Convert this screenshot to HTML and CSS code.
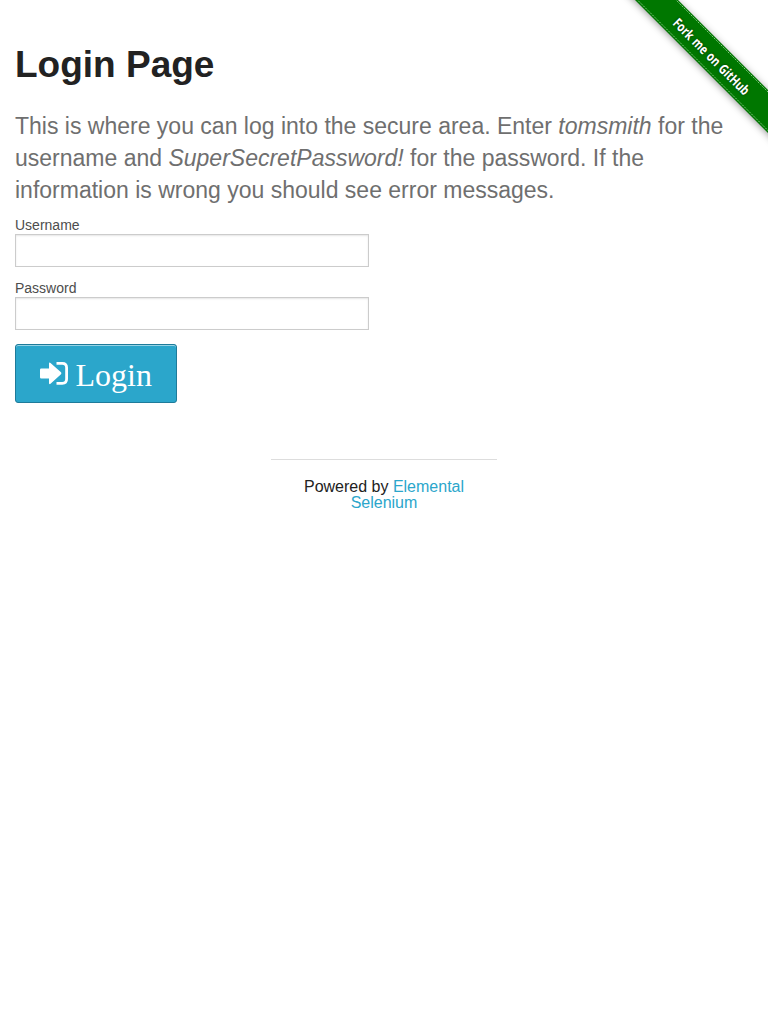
FILE: index.html
```
<!DOCTYPE html>
<html lang="en">
<head>
<meta charset="utf-8">
<title>The Internet</title>
<link rel="stylesheet" href="styles.css">
</head>
<body>
<a class="fork" href="#" aria-label="Fork me on GitHub">
<svg width="149" height="149" viewBox="0 0 149 149">
<defs><filter id="shadow" x="-20%" y="-20%" width="140%" height="140%"><feGaussianBlur stdDeviation="4"/></filter></defs>
<path class="fork-shadow" d="M4 -12L161 145V105L43 -12Z" filter="url(#shadow)"/>
<path class="fork-band" d="M15 -1L150 134V91L58 -1Z"/>
<path class="fork-stitch" d="M17.500 -1L150 131.500M56 -1L150 93"/>
<text class="fork-text" transform="translate(92.500 56.500) rotate(45)" text-anchor="middle" y="5" textLength="102" lengthAdjust="spacingAndGlyphs">Fork me on GitHub</text>
</svg>
</a>
<main class="content">
<h2 class="title">Login Page</h2>
<h4 class="subheader">This is where you can log into the secure area. Enter <em>tomsmith</em> for the username and <em>SuperSecretPassword!</em> for the password. If the information is wrong you should see error messages.</h4>
<form class="login">
<label class="label" for="username">Username</label>
<input class="field" type="text" id="username">
<label class="label" for="password">Password</label>
<input class="field" type="password" id="password">
<button class="button" type="button"><svg class="icon" width="28" height="24" viewBox="0 0 28 24"><path d="M0 8.700Q0 7.500 1.200 7.500H9V2.700Q9 .8 10.500 2L21 11.300Q21.800 12.300 21 13.300L10.500 22.800Q9 24 9 22.100V17.500H1.200Q0 17.500 0 16.300Z"/><path class="icon-door" d="M16.500 2.400H22.300Q26.600 2.400 26.600 6.700V18Q26.600 22.300 22.300 22.300H16.500"/></svg><span class="button-text">Login</span></button>
</form>
</main>
<footer class="footer">
<hr class="rule">
<div class="powered">Powered by <a class="link" href="#">Elemental Selenium</a></div>
</footer>
</body>
</html>
```
FILE: styles.css
```
* { box-sizing: border-box; }
body { margin: 0; background: #fff; color: #222; font-family: "Liberation Sans", Arial, sans-serif; font-size: 16px; line-height: 1; overflow-x: hidden; }
.fork { position: absolute; top: 0; right: 0; width: 149px; height: 149px; }
.fork svg { display: block; }
.fork-shadow { fill: #000; opacity: .5; }
.fork-band { fill: #070; }
.fork-stitch { fill: none; stroke: #8c8; stroke-width: 1; stroke-dasharray: 1.5 1; }
.fork-text { fill: #fff; font: bold 13.5px "Open Sans", sans-serif; word-spacing: 1px; text-shadow: 0 0 3px rgba(0,0,0,.6); }
.content { padding: 39px 15px 0; }
.title { margin: 0; font-size: 37px; line-height: 51.8px; font-weight: bold; }
.subheader { margin: 19.2px 0 9.4px; font-size: 23px; line-height: 32.2px; font-weight: 400; color: #6f6f6f; }
.login { display: flex; flex-direction: column; align-items: flex-start; }
.label { font-size: 14px; line-height: 18px; color: #4d4d4d; }
.field { width: 354px; height: 33px; margin: 0 0 12px; border: 1px solid #ccc; padding: 8px; box-shadow: inset 0 1px 2px rgba(0,0,0,.1); }
.button { display: flex; align-items: center; gap: 7.5px; width: 162px; height: 59px; margin-top: 2px; padding: 0 24px; border: 1px solid #1e7b9a; border-radius: 3px; background: #2ba6cb; box-shadow: inset 0 1px 0 rgba(255,255,255,.5); color: #fff; font: 32px/1 "Liberation Serif", serif; }
.icon { flex: none; fill: #fff; }
.icon-door { fill: none; stroke: #fff; stroke-width: 2.8; }
.button-text { padding-top: 3px; }
.footer { width: 226px; margin: 56px auto 0; text-align: center; }
.rule { margin: 0 0 19px; border: 0; border-top: 1px solid #ddd; }
.powered { padding: 0 15px; line-height: 16px; }
.link { color: #2ba6cb; text-decoration: none; }
```
